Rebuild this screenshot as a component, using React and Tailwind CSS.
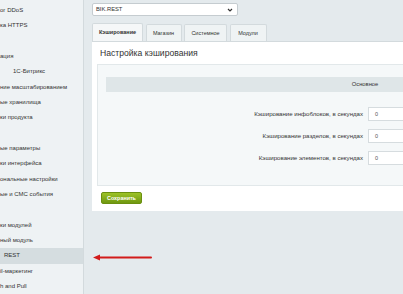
import React from "react";

const menu = [
  { t: "ог DDoS" },
  { t: "ка HTTPS" },
  { t: "" },
  { t: "ация" },
  { t: "1С-Битрикс", pad: "pl-[13px]" },
  { t: "ние масштабированием" },
  { t: "ые хранилища" },
  { t: "ки продукта" },
  { t: "" },
  { t: "ые параметры" },
  { t: "ки интерфейса" },
  { t: "ональные настройки" },
  { t: "ые и СМС события" },
  { t: "" },
  { t: "ки модулей" },
  { t: "ный модуль" },
  { t: "REST", pad: "pl-[4px]", active: true },
  { t: "il-маркетинг" },
  { t: "h and Pull" },
];

const rows = [
  "Кэширование инфоблоков, в секундах",
  "Кэширование разделов, в секундах",
  "Кэширование элементов, в секундах",
];

export default function App() {
  return (
    <div
      className="w-[403px] h-[294px] flex overflow-hidden bg-[#e4eaed] text-[#333] relative"
      style={{ fontFamily: '"Liberation Sans", Arial, sans-serif' }}
    >
      {/* Sidebar */}
      <div className="w-[84px] shrink-0 bg-[#eef2f4] border-r border-[#d3dadd] pt-[3px] overflow-hidden">
        {menu.map((m, i) => (
          <div
            key={i}
            className={`h-[15.33px] flex items-center whitespace-nowrap text-[6px] text-[#333] ${m.pad || ""} ${
              m.active ? "bg-[#d5dde0]" : ""
            }`}
          >
            {m.t}
          </div>
        ))}
      </div>

      {/* Main */}
      <div className="flex-1 min-w-0 overflow-hidden pl-[8px] pt-[3px]">
        <div className="w-[600px]">
          <div className="w-[146px] h-[13px] bg-white border border-[#c5ccd0] rounded-[2px] flex items-center justify-between px-[3px] text-[5.8px]">
            <span>BIK.REST</span>
            <svg width="6" height="4" viewBox="0 0 6 4" className="mr-[1px]">
              <path d="M1 1l2 2 2-2" fill="none" stroke="#333" strokeWidth="1.2" />
            </svg>
          </div>

          {/* Tabs */}
          <div className="flex gap-[2.5px] mt-[7px] h-[18px] items-end">
            <div className="w-[51px] h-[18px] bg-[#f5f7f8] border border-b-0 border-[#d3dadd] rounded-t-[2px] flex items-center justify-center text-[5.5px] font-bold">
              Кэширование
            </div>
            <div className="w-[36px] h-[17px] bg-[#eff3f4] border border-b-0 border-[#d3dadd] rounded-t-[2px] flex items-center justify-center text-[5.5px]">
              Магазин
            </div>
            <div className="w-[43px] h-[17px] bg-[#eff3f4] border border-b-0 border-[#d3dadd] rounded-t-[2px] flex items-center justify-center text-[5.5px]">
              Системное
            </div>
            <div className="w-[37px] h-[17px] bg-[#eff3f4] border border-b-0 border-[#d3dadd] rounded-t-[2px] flex items-center justify-center text-[5.5px]">
              Модули
            </div>
          </div>

          {/* Panel */}
          <div className="bg-white border-t border-[#d3dadd] h-[170px] pt-[5px] pl-[5px]">
            <div className="text-[8.6px] pl-[3px] leading-[13px]">Настройка кэширования</div>
            <div className="mt-[4px] w-[560px] h-[122px] bg-[#f5f8f9] border border-[#e2e8ea] pt-[12px] pl-[8px]">
              <div className="w-[518px] h-[15px] bg-[#dfe6e8] flex items-center justify-center text-[5.8px]">
                Основное
              </div>
              <div className="mt-[15px] flex flex-col gap-[8px]">
                {rows.map((r) => (
                  <div key={r} className="flex items-center h-[14px]">
                    <div className="w-[262px] text-right pr-[5px] text-[6.1px] whitespace-nowrap">{r}</div>
                    <div className="w-[80px] h-[14px] bg-white border border-[#d6dcdf] flex items-center pl-[6px] text-[5.5px] text-[#555]">
                      0
                    </div>
                  </div>
                ))}
              </div>
            </div>
            <button className="mt-[6px] ml-[4px] w-[41px] h-[12px] rounded-[2px] bg-gradient-to-b from-[#9cc227] to-[#6f9810] border border-[#6a8f10] text-white text-[5.4px] font-bold flex items-center justify-center">
              Сохранить
            </button>
          </div>
        </div>
      </div>

      {/* Red arrow */}
      <svg className="absolute left-[92px] top-[253px]" width="62" height="9" viewBox="0 0 62 9">
        <path d="M6 4.5H59" stroke="#d21b1b" strokeWidth="2" strokeLinecap="round" />
        <path d="M1 4.5L8 1.5V7.5Z" fill="#d21b1b" />
      </svg>
    </div>
  );
}
